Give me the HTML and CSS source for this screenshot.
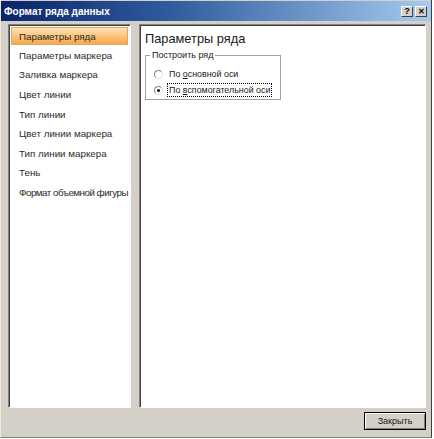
FILE: index.html
```html
<!DOCTYPE html>
<html lang="ru">
<head>
    <meta charset="UTF-8">
    <title>Формат ряда данных</title>
    <link rel="stylesheet" href="styles.css">
</head>
<body>

<div class="window">
    <div class="title-bar">
        <span class="title-text">Формат ряда данных</span>
        <div class="title-buttons">
            <span class="title-button">?</span>
            <span class="title-button close">✕</span>
        </div>
    </div>

    <div class="dialog-body">
        <ul class="nav-list">
            <li class="nav-item selected">Параметры ряда</li>
            <li class="nav-item">Параметры маркера</li>
            <li class="nav-item">Заливка маркера</li>
            <li class="nav-item">Цвет линии</li>
            <li class="nav-item">Тип линии</li>
            <li class="nav-item">Цвет линии маркера</li>
            <li class="nav-item">Тип линии маркера</li>
            <li class="nav-item">Тень</li>
            <li class="nav-item tight">Формат объемной фигуры</li>
        </ul>

        <div class="content-panel">
            <h2 class="panel-heading">Параметры ряда</h2>
            <fieldset class="group-box">
                <legend>Построить ряд</legend>
                <div class="radio-row">
                    <span class="radio"></span>
                    <span class="radio-label">По <u>о</u>сновной оси</span>
                </div>
                <div class="radio-row">
                    <span class="radio checked"></span>
                    <span class="radio-label focused">По <u>в</u>спомогательной оси</span>
                </div>
            </fieldset>
        </div>
    </div>

    <div class="footer">
        <button class="close-button">Закрыть</button>
    </div>
</div>

</body>
</html>
```

FILE: styles.css
```css
* {
    box-sizing: border-box;
}

body {
    margin: 0;
    background-color: #ffffff;
    font-family: "Liberation Sans", Arial, sans-serif;
}

/* The whole dialog window */
.window {
    width: 432px;
    height: 438px;
    background-color: #d4d0c8;
    border-left: 1px solid #ece9e2;
    border-right: 1px solid #404040;
    border-bottom: 1px solid #808080;
    display: flex;
    flex-direction: column;
}

.title-bar {
    height: 20px;
    margin-top: 1px;
    padding: 0 4px 0 3px;
    display: flex;
    align-items: center;
    justify-content: space-between;
    background: linear-gradient(to right, #0a246a, #2f5d9e 40%, #a6caf0);
}

.title-text {
    color: #ffffff;
    font-weight: bold;
    font-size: 10px;
}

.title-buttons {
    display: flex;
    gap: 2px;
}

.title-button {
    width: 12px;
    height: 11px;
    background-color: #d4d0c8;
    border-top: 1px solid #ffffff;
    border-left: 1px solid #ffffff;
    border-right: 1px solid #404040;
    border-bottom: 1px solid #404040;
    font-size: 9px;
    font-weight: bold;
    line-height: 9px;
    text-align: center;
    color: #000000;
}

.title-button.close {
    font-size: 8px;
}

/* Panels */
.dialog-body {
    display: flex;
    gap: 8px;
    padding: 3px 5px 0 7px;
    height: 387px;
}

.nav-list {
    list-style: none;
    margin: 0;
    padding: 1px 2px 0 1px;
    width: 123px;
    overflow: hidden;
    background-color: #ffffff;
    border-top: 1px solid #808080;
    border-left: 1px solid #808080;
    border-right: 1px solid #ffffff;
    border-bottom: 1px solid #ffffff;
    box-shadow: inset 1px 1px 0 #404040;
}

.nav-item {
    height: 19.6px;
    display: flex;
    align-items: center;
    padding-left: 9px;
    font-size: 9.8px;
    white-space: nowrap;
    color: #2b2b2b;
}

/* long label, squeezed so it fits like the original */
.nav-item.tight {
    letter-spacing: -0.5px;
}

.nav-item.selected {
    height: 18px;
    margin: 1px 0 0.6px 1px;
    padding-left: 7px;
    border: 1px solid #d8a870;
    background: linear-gradient(to bottom, #fde2b4, #fbc47e 50%, #f7a84a);
}

.content-panel {
    flex: 1;
    background-color: #ffffff;
    border-top: 1px solid #808080;
    border-left: 1px solid #808080;
    border-right: 1px solid #ffffff;
    border-bottom: 1px solid #ffffff;
    box-shadow: inset 1px 1px 0 #404040;
    padding: 6px 0 0 5px;
}

.panel-heading {
    margin: 0;
    font-weight: normal;
    font-size: 12.8px;
    color: #1a1a1a;
}

.group-box {
    margin: 4px 0 0 0;
    width: 136px;
    height: 50px;
    padding: 6px 0 0 8px;
    border: 1px solid #a0a0a0;
    box-shadow: 1px 1px 0 #ffffff;
}

.group-box legend {
    font-size: 9px;
    padding: 0 2px;
    margin-left: -4px;
    color: #1a1a1a;
}

.radio-row {
    display: flex;
    align-items: center;
    gap: 4px;
    height: 16px;
}

.radio {
    width: 9px;
    height: 9px;
    border-radius: 50%;
    border: 1px solid #808080;
    border-bottom-color: #e0e0e0;
    border-right-color: #e0e0e0;
    background-color: #ffffff;
    position: relative;
}

.radio.checked::after {
    content: "";
    position: absolute;
    left: 2px;
    top: 2px;
    width: 3px;
    height: 3px;
    border-radius: 50%;
    background-color: #000000;
}

.radio-label {
    font-size: 8.9px;
    color: #1a1a1a;
    padding: 1px 1px;
    border: 1px solid transparent;
}

.radio-label.focused {
    border: 1px dotted #000000;
}

/* Footer button */
.footer {
    flex: 1;
    display: flex;
    justify-content: flex-end;
    padding: 4px 5px 0 0;
}

.close-button {
    width: 62px;
    height: 18px;
    padding: 0;
    background-color: #d4d0c8;
    border: 1px solid #000000;
    box-shadow: inset 1px 1px 0 #ffffff, inset -1px -1px 0 #808080;
    font-family: "Liberation Sans", Arial, sans-serif;
    font-size: 9px;
    color: #1a1a1a;
}
```
